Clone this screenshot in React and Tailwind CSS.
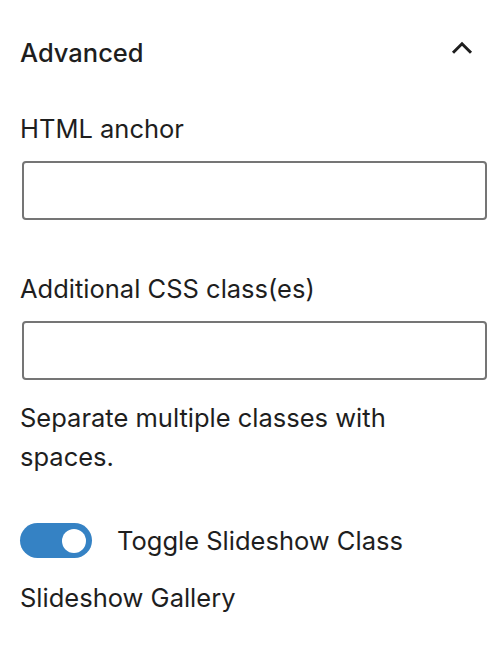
import { useState } from 'react';

const font = { fontFamily: 'Inter, "Noto Sans", sans-serif' };

const ChevronUp = () => (
  <svg width="24" height="24" viewBox="0 0 24 24" className="text-[#1e1e1e]">
    <path d="M3 15.8 12 6.8l9 9" fill="none" stroke="currentColor" strokeWidth="3" />
  </svg>
);

const TextField = ({ label, help }) => (
  <div className="flex flex-col">
    <label className="text-[25.5px] leading-[32px] text-[#1e1e1e]">{label}</label>
    <input
      type="text"
      className="mt-[16px] h-[59px] w-[465px] ml-[2px] rounded-[4px] border-2 border-[#757575] bg-white px-3 outline-none"
    />
    {help && (
      <p className="mt-[18px] text-[25.5px] leading-[39px] text-[#1e1e1e] w-[420px]">{help}</p>
    )}
  </div>
);

const Toggle = ({ checked, onChange, label }) => (
  <label className="flex items-center gap-[25px] cursor-pointer">
    <button
      type="button"
      onClick={() => onChange(!checked)}
      className={`relative flex h-[35px] w-[72px] items-center rounded-full px-[6px] ${
        checked ? 'justify-end bg-[#3582c4]' : 'justify-start bg-[#757575]'
      }`}
    >
      <span className="block h-[24px] w-[24px] rounded-full bg-white" />
    </button>
    <span className="text-[25.5px] leading-[32px] text-[#1e1e1e]">{label}</span>
  </label>
);

export default function App() {
  const [slideshow, setSlideshow] = useState(true);

  return (
    <div className="min-h-[648px] w-[504px] bg-white pl-[20px] pr-[17px]" style={font}>
      {/* Panel header */}
      <div className="flex items-start justify-between pt-[37px] pb-[44px] pr-[13px]">
        <h2 className="text-[25.5px] leading-[32px] font-medium text-[#1e1e1e]">Advanced</h2>
        <ChevronUp />
      </div>

      <TextField label="HTML anchor" />
      <div className="h-[53px]" />
      <TextField label="Additional CSS class(es)" help="Separate multiple classes with spaces." />

      <div className="mt-[47px]">
        <Toggle checked={slideshow} onChange={setSlideshow} label="Toggle Slideshow Class" />
      </div>
      <p className="mt-[24px] text-[25.5px] leading-[32px] text-[#1e1e1e]">Slideshow Gallery</p>
    </div>
  );
}
